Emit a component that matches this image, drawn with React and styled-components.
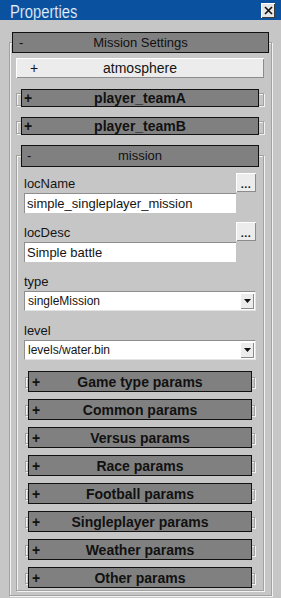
import React from 'react';
import styled, { createGlobalStyle } from 'styled-components';

const GlobalStyle = createGlobalStyle`
  html, body {
    margin: 0;
    padding: 0;
    background: #c6c6c6;
  }
  body {
    font-family: "Liberation Sans", Arial, sans-serif;
    color: #141414;
  }
`;

const Window = styled.div`
  width: 281px;
  height: 598px;
  overflow: hidden;
  display: flex;
  flex-direction: column;
  background: #c6c6c6;
`;

const TitleBar = styled.div`
  height: 20px;
  flex: none;
  background: #0a52a0;
  display: flex;
  align-items: center;
  justify-content: space-between;
  padding: 0 6px 0 10px;
  overflow: hidden;
`;

const Title = styled.span`
  font-family: "Liberation Sans", Arial, sans-serif;
  font-size: 18px;
  font-weight: 400;
  line-height: 20px;
  color: #eef4ff;
  margin-top: 3px;
  transform: scaleX(0.82);
  transform-origin: left center;
  -webkit-text-stroke: 0.2px #0a52a0;
`;

const CloseButton = styled.div`
  width: 14px;
  height: 15px;
  background: #e6e6e6;
  box-shadow: inset 1px 1px 0 #ffffff, inset -1px -1px 0 #3c3c3c;
  display: grid;
  place-items: center;
`;

const Content = styled.div`
  flex: 1;
  padding: 12px 9px 0 9px;
`;

const RolloutWrap = styled.section`
  padding-top: ${p => p.$lip}px;
`;

const Frame = styled.div`
  border: 1px solid #a2a2a2;
  box-shadow: inset 1px 1px 0 #f2f2f2, 1px 1px 0 #f2f2f2;
`;

const Bar = styled.div`
  box-sizing: border-box;
  height: ${p => p.$h}px;
  margin: ${p => -(p.$lip + 1)}px ${p => p.$inset}px ${p => -p.$tuck}px;
  background: #808080;
  border: 1px solid #111;
  display: grid;
  grid-template-columns: 1fr auto 1fr;
  align-items: center;
  font-size: ${p => (p.$bold ? 14 : 13)}px;
  font-weight: ${p => (p.$bold ? 700 : 400)};
  line-height: 16px;
  color: #111;
`;

const Sign = styled.span`
  justify-self: start;
  padding-left: ${p => p.$pad}px;
  font-weight: ${p => (p.$open ? 400 : 700)};
`;

const OuterBody = styled.div`
  display: flex;
  flex-direction: column;
  gap: 11px;
  padding: 5px 7px 4px 6px;
`;

const SubButton = styled.div`
  height: 20px;
  background: #ececec;
  box-shadow: inset 1px 1px 0 #ffffff, inset -1px -1px 0 #8c8c8c;
  display: grid;
  grid-template-columns: 1fr auto 1fr;
  align-items: center;
  font-size: 14px;
  line-height: 16px;
`;

const MissionBody = styled.div`
  display: flex;
  flex-direction: column;
  gap: 11px;
  padding: 6px 7px 6px 7px;
`;

const FieldList = styled.div`
  display: flex;
  flex-direction: column;
  gap: 9px;
`;

const Field = styled.div`
  display: grid;
  grid-template-columns: 1fr 20px;
  grid-template-rows: 20px 20px;
`;

const Label = styled.label`
  align-self: end;
  font-size: 13px;
  line-height: 15px;
  padding-bottom: 2px;
`;

const DotsButton = styled.div`
  box-sizing: border-box;
  width: 20px;
  height: 19px;
  background: #ececec;
  box-shadow: inset 1px 1px 0 #ffffff, inset -1px -1px 0 #8c8c8c;
  display: flex;
  align-items: flex-end;
  justify-content: center;
  padding-bottom: 4px;
  font-size: 11px;
  font-weight: 700;
  line-height: 8px;
  letter-spacing: 0.5px;
`;

const TextBox = styled.input`
  grid-column: 1;
  box-sizing: border-box;
  width: 100%;
  height: 20px;
  margin: 0;
  padding: 0 0 0 2px;
  border: none;
  border-top: 1px solid #8e8e8e;
  border-left: 1px solid #8e8e8e;
  background: #ffffff;
  font-family: "Liberation Sans", Arial, sans-serif;
  font-size: 13px;
  color: #141414;
  outline: none;
`;

const Select = styled.div`
  grid-column: 1 / 3;
  box-sizing: border-box;
  height: 20px;
  background: #ffffff;
  border-top: 1px solid #8e8e8e;
  border-left: 1px solid #8e8e8e;
  border-right: 1px solid #e4e4e4;
  border-bottom: 1px solid #e4e4e4;
  display: flex;
  align-items: center;
  justify-content: space-between;
  padding: 0 1px 0 3px;
  font-size: 12px;
`;

const ArrowBox = styled.div`
  width: 14px;
  height: 16px;
  background: #ececec;
  box-shadow: inset 1px 1px 0 #ffffff, inset -1px -1px 0 #8c8c8c;
  display: grid;
  place-items: center;
`;

const ParamList = styled.div`
  display: flex;
  flex-direction: column;
  gap: 11px;
  margin: 0 1px;
`;

function Rollout({ title, open, bold, h, lip, inset, tuck = 0, signPad, children }) {
  return (
    <RolloutWrap $lip={lip}>
      <Frame>
        <Bar $h={h} $lip={lip} $inset={inset} $tuck={tuck} $bold={bold}>
          <Sign $pad={signPad} $open={open}>{open ? '-' : '+'}</Sign>
          <span>{title}</span>
        </Bar>
        {children}
      </Frame>
    </RolloutWrap>
  );
}

function TextField({ label, value }) {
  return (
    <Field>
      <Label>{label}</Label>
      <DotsButton>...</DotsButton>
      <TextBox readOnly value={value} />
    </Field>
  );
}

function SelectField({ label, value }) {
  return (
    <Field>
      <Label>{label}</Label>
      <span />
      <Select>
        <span>{value}</span>
        <ArrowBox>
          <svg width="7" height="4" viewBox="0 0 7 4">
            <path d="M0 0h7L3.5 4z" fill="#111" />
          </svg>
        </ArrowBox>
      </Select>
    </Field>
  );
}

const params = [
  'Game type params',
  'Common params',
  'Versus params',
  'Race params',
  'Football params',
  'Singleplayer params',
  'Weather params',
  'Other params',
];

export default function App() {
  return (
    <Window>
      <GlobalStyle />
      <TitleBar>
        <Title>Properties</Title>
        <CloseButton>
          <svg width="9" height="9" viewBox="0 0 9 9">
            <path d="M1 1l7 7M8 1L1 8" stroke="#111" strokeWidth="1.6" />
          </svg>
        </CloseButton>
      </TitleBar>
      <Content>
        <Rollout title="Mission Settings" open h={21} lip={10} inset={2} signPad={6}>
          <OuterBody>
            <SubButton>
              <Sign $pad={14} $open>+</Sign>
              <span>atmosphere</span>
            </SubButton>
            <Rollout title="player_teamA" bold h={18} lip={4} inset={4} tuck={2} signPad={2} />
            <Rollout title="player_teamB" bold h={18} lip={4} inset={4} tuck={2} signPad={2} />
            <Rollout title="mission" open h={22} lip={10} inset={4} signPad={5}>
              <MissionBody>
                <FieldList>
                  <TextField label="locName" value="simple_singleplayer_mission" />
                  <TextField label="locDesc" value="Simple battle" />
                  <SelectField label="type" value="singleMission" />
                  <SelectField label="level" value="levels/water.bin" />
                </FieldList>
                <ParamList>
                  {params.map(p => (
                    <Rollout key={p} title={p} bold h={21} lip={6} inset={2} tuck={5} signPad={3} />
                  ))}
                </ParamList>
              </MissionBody>
            </Rollout>
          </OuterBody>
        </Rollout>
      </Content>
    </Window>
  );
}
